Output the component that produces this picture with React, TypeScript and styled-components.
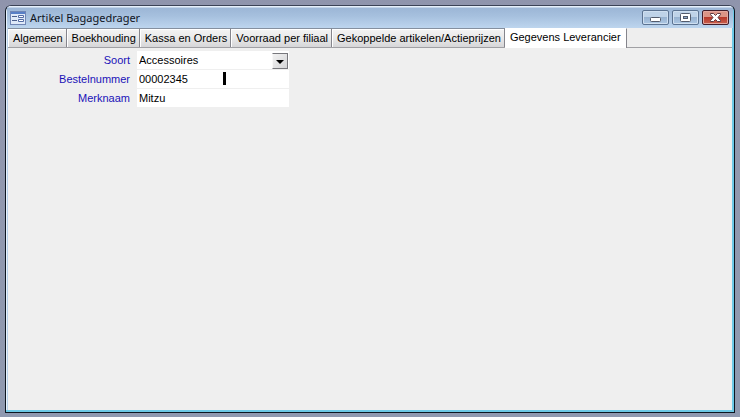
import React, { useState } from "react";
import styled, { createGlobalStyle } from "styled-components";

const GlobalStyle = createGlobalStyle`
  * { box-sizing: border-box; }
  html, body, #root { height: 100%; }
  body {
    margin: 0;
    background: #9298ae;
    font-family: "Liberation Sans", Arial, sans-serif;
    font-size: 11px;
    color: #000;
  }
  button, input, select { font: inherit; color: inherit; margin: 0; }
`;

const Desktop = styled.div`
  height: 100%;
  padding: 5px 5px 4px;
  background: linear-gradient(#8f94ac, #9298ae 30px, #8f99b0);
`;

const WindowFrame = styled.main`
  height: 100%;
  display: flex;
  flex-direction: column;
  overflow: hidden;
  border: 1px solid #0c1520;
  border-top-color: #3c4356;
  border-radius: 6px 6px 0 0;
  background: #b9d1ea;
  box-shadow: inset -2px -2px 0 #6cc9e6, inset 1px 1px 0 #e8f3fc;
  padding: 0 2px 2px;
`;

const TitleBar = styled.header`
  flex: none;
  height: 22px;
  display: flex;
  align-items: center;
  margin: 0 -1px;
  padding: 1px 4px 0 3px;
  background: linear-gradient(#e6effa 0, #e6effa 1px, #9cb6d6 2px, #a6c0de 10px, #bdd5ee 100%);
`;

const Title = styled.h1`
  flex: 1;
  margin: 0 0 0 4px;
  font: 400 11px/16px "Noto Sans", "Open Sans", sans-serif;
  color: #10151f;
`;

const WindowButtons = styled.div`
  display: flex;
  gap: 3px;
`;

const WindowButton = styled.button<{ $danger?: boolean }>`
  width: 27px;
  height: 15px;
  padding: 0;
  display: grid;
  place-items: center;
  border: 1px solid ${(p) => (p.$danger ? "#421d2a" : "#5c7391")};
  border-radius: 2px;
  box-shadow: inset 0 0 0 1px ${(p) => (p.$danger ? "#e3a79e" : "#cfdff0")};
  background: ${(p) =>
    p.$danger
      ? "linear-gradient(#dc9486 0 45%, #b8392b 50%, #c8604e)"
      : "linear-gradient(#bfd3e8 0 45%, #98b3d1 50%, #aec8e4)"};
`;

const Tabs = styled.div`
  flex: none;
  height: 20px;
  display: flex;
  background: #eee;
  border-bottom: 1px solid #a0a0a4;
`;

const Tab = styled.button<{ $active: boolean }>`
  flex: none;
  height: ${(p) => (p.$active ? 20 : 19)}px;
  padding: ${(p) => (p.$active ? "0 5px 4px" : "0 3px 0 5px")};
  border: 0;
  border-right: 1px solid #85858c;
  border-top: 1px solid ${(p) => (p.$active ? "#fff" : "#85909f")};
  background: ${(p) => (p.$active ? "#fff" : "linear-gradient(#f4f4f4, #e9e9e9 50%, #d6d6d8)")};
  box-shadow: ${(p) => (p.$active ? "none" : "inset 1px 1px 0 #fff")};
  line-height: 14px;
  white-space: nowrap;
`;

const Panel = styled.form`
  flex: 1;
  min-height: 0;
  padding: 3px 0 0 9px;
  background: #efefef;
`;

const Fields = styled.div`
  display: grid;
  grid-template-columns: 113px 152px;
  column-gap: 7px;
  row-gap: 1px;
`;

const Label = styled.label`
  text-align: right;
  color: #1a12b8;
  line-height: 18px;
`;

const Field = styled.div`
  position: relative;
  display: flex;
  height: 18px;
  background: #fff;
`;

const TextBox = styled.input`
  width: 100%;
  padding: 0 2px;
  border: 0;
  outline: 0;
  background: transparent;
`;

const DropDown = styled.select`
  width: 100%;
  padding: 0 18px 0 2px;
  border: 0;
  outline: 0;
  appearance: none;
  background: transparent;
`;

const DropArrow = styled.span`
  position: absolute;
  right: 1px;
  top: 2px;
  width: 16px;
  height: 16px;
  padding-top: 2px;
  display: grid;
  place-items: center;
  border: 1px solid;
  border-color: #77777c #77777c #77777c #f8f8f8;
  background: linear-gradient(135deg, #f2f2f2, #d4d4d6);
  pointer-events: none;
`;

const TextCursor = styled.span`
  position: absolute;
  left: 86px;
  top: 2px;
  width: 3px;
  height: 13px;
  background: #000;
  pointer-events: none;
`;

const FormIcon = () => (
  <svg width="16" height="14" viewBox="0 0 16 14" aria-hidden="true">
    <rect x=".5" y=".5" width="15" height="13" fill="#dfe9f8" stroke="#7186b4" />
    <path d="M1 1h14v2H1z" fill="#587fc6" />
    <path d="M2 5.500h5M2 9.500h5" stroke="#4c5f8c" />
    <path d="M8.500 4.500h5v2h-5zM8.500 8.500h5v2h-5z" fill="#fff" stroke="#536ca4" />
  </svg>
);

const MinimizeIcon = () => (
  <svg width="12" height="11" viewBox="0 0 12 11" aria-hidden="true">
    <rect x=".5" y="5.500" width="10" height="4" rx="1" fill="#fff" stroke="#535b6b" />
  </svg>
);

const MaximizeIcon = () => (
  <svg width="11" height="9" viewBox="0 0 11 9" aria-hidden="true">
    <rect x=".5" y=".5" width="10" height="8" rx="1" fill="#fff" stroke="#535b6b" />
    <rect x="3.500" y="3.500" width="4" height="2" fill="#8faaca" stroke="#535b6b" />
  </svg>
);

const CloseIcon = () => (
  <svg width="11" height="9" viewBox="0 0 11 9" aria-hidden="true">
    <path
      d="M.5.5h3l2 2 2-2h3v1l-2.500 3 2.500 3v1h-3l-2-2-2 2h-3v-1L3 4.500l-2.500-3z"
      fill="#fff"
      stroke="#5c3940"
    />
  </svg>
);

const TABS = [
  "Algemeen",
  "Boekhouding",
  "Kassa en Orders",
  "Voorraad per filiaal",
  "Gekoppelde artikelen/Actieprijzen",
  "Gegevens Leverancier",
];

export default function App() {
  const [active, setActive] = useState(TABS.length - 1);

  return (
    <Desktop>
      <GlobalStyle />
      <WindowFrame>
        <TitleBar>
          <FormIcon />
          <Title>Artikel Bagagedrager</Title>
          <WindowButtons>
            <WindowButton type="button" aria-label="Minimaliseren"><MinimizeIcon /></WindowButton>
            <WindowButton type="button" aria-label="Maximaliseren"><MaximizeIcon /></WindowButton>
            <WindowButton type="button" aria-label="Sluiten" $danger><CloseIcon /></WindowButton>
          </WindowButtons>
        </TitleBar>
        <Tabs role="tablist">
          {TABS.map((name, i) => (
            <Tab
              key={name}
              type="button"
              role="tab"
              aria-selected={i === active}
              $active={i === active}
              onClick={() => setActive(i)}
            >
              {name}
            </Tab>
          ))}
        </Tabs>
        <Panel>
          <Fields>
            <Label htmlFor="soort">Soort</Label>
            <Field>
              <DropDown id="soort" defaultValue="Accessoires">
                <option>Accessoires</option>
              </DropDown>
              <DropArrow>
                <svg width="8" height="4" viewBox="0 0 8 4" aria-hidden="true">
                  <path d="M0 0h8L4 4z" />
                </svg>
              </DropArrow>
            </Field>
            <Label htmlFor="bestelnummer">Bestelnummer</Label>
            <Field>
              <TextBox id="bestelnummer" defaultValue="00002345" />
              <TextCursor />
            </Field>
            <Label htmlFor="merknaam">Merknaam</Label>
            <Field>
              <TextBox id="merknaam" defaultValue="Mitzu" />
            </Field>
          </Fields>
        </Panel>
      </WindowFrame>
    </Desktop>
  );
}
